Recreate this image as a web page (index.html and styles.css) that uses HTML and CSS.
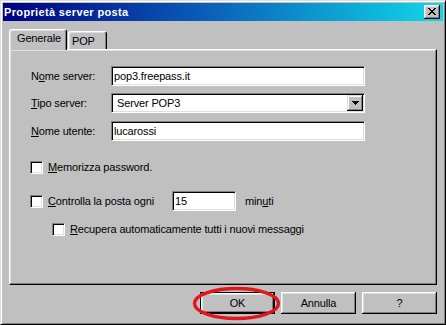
FILE: index.html
```html
<!DOCTYPE html>
<html lang="it">
<head>
<meta charset="utf-8">
<title>Proprietà server posta</title>
<link rel="stylesheet" href="styles.css">
</head>
<body>
<div class="window">
  <div class="titlebar">
    <span class="title">Proprietà server posta</span>
    <span class="close"><svg width="8" height="7" viewBox="0 0 8 7" shape-rendering="crispEdges"><path d="M0 0h2v1h1v1h2v-1h1v-1h2v1h-1v1h-1v1h-1v1h1v1h1v1h1v1h-2v-1h-1v-1h-2v1h-1v1h-2v-1h1v-1h1v-1h1v-1h-1v-1h-1v-1h-1z" fill="#000"/></svg></span>
  </div>
  <div class="body">
    <div class="tabs">
      <div class="tab active">Generale</div>
      <div class="tab pop">POP</div>
    </div>
    <div class="panel">
      <div class="field">
        <span class="lbl">N<u>o</u>me server:</span>
        <div class="textbox">pop3.freepass.it</div>
      </div>
      <div class="field f2">
        <span class="lbl"><u>T</u>ipo server:</span>
        <div class="textbox select">Server POP3<span class="drop"><svg width="7" height="4" viewBox="0 0 7 4" shape-rendering="crispEdges"><path d="M0 0h7v1h-1v1h-1v1h-1v1h-1v-1h-1v-1h-1v-1h-1z" fill="#000"/></svg></span></div>
      </div>
      <div class="field f3">
        <span class="lbl"><u>N</u>ome utente:</span>
        <div class="textbox">lucarossi</div>
      </div>
      <div class="check c1">
        <span class="box"></span>
        <span class="ctext"><u>M</u>emorizza password.</span>
      </div>
      <div class="check c2">
        <span class="box"></span>
        <span class="ctext wide"><u>C</u>ontrolla la posta ogni</span>
        <div class="textbox small">15</div>
        <span class="unit">min<u>u</u>ti</span>
      </div>
      <div class="check c3">
        <span class="box"></span>
        <span class="ctext"><u>R</u>ecupera automaticamente tutti i nuovi messaggi</span>
      </div>
    </div>
    <div class="buttons">
      <div class="btn default">OK</div>
      <div class="btn">Annulla</div>
      <div class="btn">?</div>
    </div>
  </div>
  <svg class="mark" width="92" height="38" viewBox="0 0 92 38"><ellipse cx="45.5" cy="18.5" rx="42" ry="15" fill="none" stroke="#e3161c" stroke-width="3.4"/></svg>
</div>
</body>
</html>
```
FILE: styles.css
```css
html, body {
  margin: 0;
  padding: 0;
  background: #c0c0c0;
}
* { box-sizing: border-box; }

.window {
  position: relative;
  width: 446px;
  height: 325px;
  background: #c0c0c0;
  border: 1px solid;
  border-color: #dfdfdf #000 #000 #dfdfdf;
  box-shadow: inset 1px 1px #fff, inset -1px -1px #808080;
  padding: 2px;
  display: flex;
  flex-direction: column;
  font-family: "Liberation Sans", Arial, sans-serif;
  font-size: 11px;
  letter-spacing: -0.15px;
  color: #000;
}

.titlebar {
  height: 18px;
  flex: none;
  display: flex;
  align-items: center;
  justify-content: space-between;
  background: linear-gradient(90deg, #000080 0%, #0a5cb8 45%, #10d8e8 100%);
  padding-left: 1px;
  padding-right: 3px;
}
.title {
  color: #fff;
  font-weight: bold;
  font-size: 11px;
  letter-spacing: 0.35px;
  line-height: 13px;
}
.close {
  width: 16px;
  height: 14px;
  background: #c0c0c0;
  box-shadow: inset -1px -1px #000, inset 1px 1px #fff, inset -2px -2px #808080, inset 2px 2px #dfdfdf;
  display: flex;
  align-items: center;
  justify-content: center;
  padding: 0 1px 1px 0;
}
.close svg { display: block; }

.body {
  flex: 1;
  display: flex;
  flex-direction: column;
  padding: 8px 6px 8px 6px;
}

.tabs {
  height: 20px;
  display: flex;
  align-items: flex-end;
  position: relative;
  z-index: 1;
}
.tab {
  background: #c0c0c0;
  border-top: 1px solid #fff;
  border-left: 1px solid #fff;
  border-right: 1px solid #000;
  border-radius: 3px 3px 0 0;
  box-shadow: inset -1px 0 #808080, inset 1px 1px #dfdfdf;
  line-height: 13px;
}
.tab.active {
  width: 58px;
  height: 21px;
  margin-bottom: -1px;
  padding: 2px 0 0 7px;
}
.tab.pop {
  width: 39px;
  height: 18px;
  margin-left: 1px;
  padding: 3px 0 0 3px;
}

.panel {
  height: 236px;
  flex: none;
  border: 1px solid;
  border-color: #fff #000 #000 #fff;
  box-shadow: inset -1px -1px #808080, inset 1px 1px #dfdfdf;
  padding: 16px 0 0 21px;
}

.field {
  display: flex;
  align-items: center;
  height: 20px;
}
.field.f2 { margin-top: 7px; }
.field.f3 { margin-top: 8px; }
.lbl {
  width: 80px;
  line-height: 13px;
}
u { text-decoration: underline; text-underline-offset: 1px; }

.textbox {
  position: relative;
  width: 254px;
  height: 20px;
  background: #fff;
  border: 1px solid;
  border-color: #808080 #fff #fff #808080;
  box-shadow: inset 1px 1px #000, inset -1px -1px #dfdfdf;
  padding: 1px 0 0 2px;
  line-height: 16px;
  white-space: nowrap;
}
.textbox.select { padding-left: 5px; }
.drop {
  position: absolute;
  right: 1px;
  top: 1px;
  width: 16px;
  height: 16px;
  background: #c0c0c0;
  box-shadow: inset -1px -1px #000, inset 1px 1px #dfdfdf, inset -2px -2px #808080, inset 2px 2px #fff;
  display: flex;
  align-items: center;
  justify-content: center;
}
.drop svg { display: block; }

.check {
  display: flex;
  align-items: center;
}
.check.c1 {
  margin-top: 20px;
  margin-left: -1px;
  height: 13px;
}
.check.c2 {
  margin-top: 17px;
  margin-left: -1px;
  height: 20px;
}
.check.c3 {
  margin-top: 12px;
  margin-left: 21px;
  height: 13px;
}
.box {
  width: 13px;
  height: 13px;
  flex: none;
  background: #fff;
  border: 1px solid;
  border-color: #808080 #fff #fff #808080;
  box-shadow: inset 1px 1px #000, inset -1px -1px #dfdfdf;
}
.ctext {
  margin-left: 5px;
  line-height: 13px;
  white-space: nowrap;
}
.ctext.wide { width: 124px; }
.textbox.small {
  width: 64px;
}
.unit {
  margin-left: 9px;
  line-height: 13px;
}

.buttons {
  margin-top: 7px;
  display: flex;
  justify-content: flex-end;
  gap: 6px;
}
.btn {
  width: 75px;
  height: 22px;
  background: #c0c0c0;
  box-shadow: inset -1px -1px #000, inset 1px 1px #fff, inset -2px -2px #808080, inset 2px 2px #dfdfdf;
  display: flex;
  align-items: center;
  justify-content: center;
  line-height: 13px;
}
.btn.default {
  border: 1px solid #000;
}

.mark {
  position: absolute;
  left: 190px;
  top: 284px;
  pointer-events: none;
}
```
